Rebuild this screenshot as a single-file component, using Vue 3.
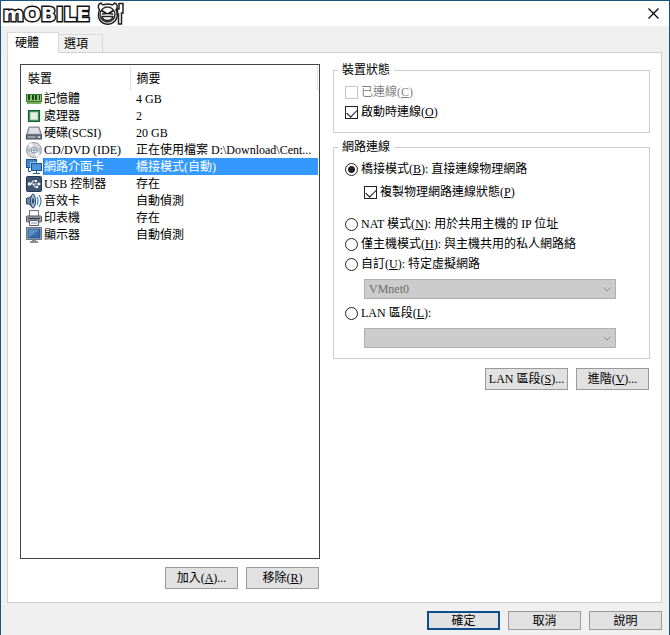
<script setup>
import { ref } from 'vue'

const devices = [
  { icon: 'memory', name: '記憶體', summary: '4 GB' },
  { icon: 'cpu', name: '處理器', summary: '2' },
  { icon: 'disk', name: '硬碟(SCSI)', summary: '20 GB' },
  { icon: 'cd', name: 'CD/DVD (IDE)', summary: '正在使用檔案 D:\\Download\\Cent...' },
  { icon: 'network', name: '網路介面卡', summary: '橋接模式(自動)' },
  { icon: 'usb', name: 'USB 控制器', summary: '存在' },
  { icon: 'sound', name: '音效卡', summary: '自動偵測' },
  { icon: 'printer', name: '印表機', summary: '存在' },
  { icon: 'display', name: '顯示器', summary: '自動偵測' }
]

const selected = ref(4)
const connected = ref(false)
const connectAtPowerOn = ref(true)
const replicate = ref(true)
const mode = ref('bridged')
</script>

<template>
  <div class="window">
    <header class="titlebar">
      <h1 class="logo">
        <span class="brand">mOBILE</span>
        <svg class="mascot" viewBox="0 0 28 24" aria-hidden="true">
          <path d="M2.500 8 C0.500 5 1 1.500 4 1 C4.500 2.500 6 3 7.500 2.500 Q11 1.500 14 2.500 C15.500 3 17 2.500 17.500 1 C20.500 1.500 21 5 19 8 Q22 14 18 19 Q14 23 9 22 Q3 21 1.500 15 Q1 11 2.500 8Z" fill="#fff" stroke="#222" stroke-width="1.500" />
          <circle cx="10.500" cy="12.500" r="7.500" fill="#fff" stroke="#333" stroke-width="1.500" />
          <path d="M4.500 8.500L9.500 11.500L5 12M16.500 8.500L11.500 11.500L16 12" fill="none" stroke="#111" stroke-width="1.600" />
          <path d="M5 14.500H16Q15 18.500 10.500 18.500Q6 18.500 5 14.500Z" fill="#fff" stroke="#222" stroke-width="1.300" />
          <path d="M22 1.500H26V11H24.500V22H21.500V12H20.500V7H22Z" fill="#fff" stroke="#222" stroke-width="1.500" />
        </svg>
      </h1>
      <button class="close" type="button" aria-label="關閉">
        <svg viewBox="0 0 11 11" aria-hidden="true">
          <path d="M0.500 0.500 L10.500 10.500 M10.500 0.500 L0.500 10.500" stroke="#000" stroke-width="1.200" />
        </svg>
      </button>
    </header>

    <main class="body">
      <div class="tabs" role="tablist">
        <button class="tab active" type="button" role="tab" aria-selected="true">硬體</button>
        <button class="tab" type="button" role="tab" aria-selected="false">選項</button>
      </div>

      <div class="panel" role="tabpanel">
        <section class="left">
          <div class="list">
            <table>
              <colgroup>
                <col class="c-icon" />
                <col class="c-name" />
                <col />
              </colgroup>
              <thead>
                <tr>
                  <th colspan="2">裝置</th>
                  <th>摘要</th>
                </tr>
              </thead>
              <tbody>
                <tr v-for="(d, i) in devices" :key="d.name" :class="{ selected: i === selected }" @click="selected = i">
                  <td class="icon">
                    <svg v-if="d.icon === 'memory'" viewBox="0 0 16 16">
                      <path d="M0 3H16V11H15V13H1V11H0Z" fill="#2b7a2e" />
                      <path d="M1 4H15V10H1Z" fill="#8dc06a" />
                      <path d="M2 4H4V9H2ZM6 4H8V9H6ZM9 4H11V9H9ZM13 4H14V9H13Z" fill="#17451c" />
                      <path d="M2 11V13M4 11V13M6 11V13M8 11V13M10 11V13M12 11V13M14 11V13" stroke="#d6e078" />
                    </svg>
                    <svg v-else-if="d.icon === 'cpu'" viewBox="0 0 16 16">
                      <rect x="2" y="2" width="12" height="12" fill="#3d9657" />
                      <path d="M2.500 2.500H13.500V13.500H2.500Z" fill="none" stroke="#17632f" stroke-width="1.200" />
                      <rect x="4.500" y="4.500" width="7" height="7" fill="#e4eee4" stroke="#b9d8be" />
                    </svg>
                    <svg v-else-if="d.icon === 'disk'" viewBox="0 0 16 16">
                      <path d="M3 2H13L15.500 10H0.500Z" fill="#c3c8ce" stroke="#737a84" />
                      <path d="M4 3H12L13 8H3Z" fill="#dfe3e7" />
                      <rect x="0.500" y="10" width="15" height="4" fill="#747c88" stroke="#454d59" />
                      <path d="M2 12H9" stroke="#bfc5ce" />
                      <circle cx="13" cy="12" r="1" fill="#dfe6ed" />
                    </svg>
                    <svg v-else-if="d.icon === 'cd'" viewBox="0 0 16 16">
                      <circle cx="8" cy="8" r="7.500" fill="#d5d8dc" stroke="#9097a0" />
                      <path d="M8 8L2 3A8 8 0 0 1 6 1ZM8 8L14 13A8 8 0 0 1 10 15Z" fill="#f7f8fa" />
                      <path d="M8 8L1 11A7 7 0 0 1 1 6ZM8 8L15 5A7 7 0 0 1 15 10Z" fill="#b9bfc8" />
                      <circle cx="8" cy="8" r="3" fill="#e6ebf0" stroke="#8996a8" />
                      <circle cx="8" cy="8" r="1" fill="#fff" stroke="#5d7fa4" />
                    </svg>
                    <svg v-else-if="d.icon === 'network'" viewBox="0 0 16 16">
                      <rect x="0.500" y="0.500" width="10" height="8" fill="#4187c8" stroke="#1b5798" />
                      <rect x="4.500" y="3.500" width="11" height="9" fill="#fff" />
                      <rect x="5.500" y="4.500" width="10" height="7" fill="#4d95d8" stroke="#195391" />
                      <path d="M10.500 12V14M7 14.500H14M2.500 9V12.500H5" fill="none" stroke="#235b90" />
                    </svg>
                    <svg v-else-if="d.icon === 'usb'" viewBox="0 0 16 16">
                      <rect x="0.500" y="0.500" width="15" height="15" rx="1" fill="#3c5570" stroke="#263b52" />
                      <path d="M3 8H13M5 8L7 5H10M7 8L9 11H11" fill="none" stroke="#e7edf3" stroke-width="1.200" />
                      <circle cx="3.500" cy="8" r="1.800" fill="#eff3f7" />
                      <path d="M12 6L15 8L12 10Z" fill="#fff" />
                      <rect x="9" y="4" width="2" height="2" fill="#fff" />
                      <circle cx="11" cy="11" r="1.200" fill="#fff" />
                    </svg>
                    <svg v-else-if="d.icon === 'sound'" viewBox="0 0 16 16">
                      <path d="M0.500 5H3L7 1V15L3 11H0.500Z" fill="#6b88a9" stroke="#2e4b70" />
                      <ellipse cx="7" cy="8" rx="2.500" ry="7" fill="#9db6d0" stroke="#294b76" />
                      <ellipse cx="7" cy="8" rx="1" ry="3" fill="#27476f" />
                      <path d="M11 4Q13 8 11 12M13 2Q17 8 13 14" fill="none" stroke="#3d7fc2" stroke-width="1.200" />
                    </svg>
                    <svg v-else-if="d.icon === 'printer'" viewBox="0 0 16 16">
                      <path d="M3.500 0.500H12.500V7H3.500Z" fill="#fff" stroke="#6b7077" />
                      <rect x="0.500" y="6" width="15" height="6" rx="1" fill="#a5aab2" stroke="#4c525b" />
                      <path d="M2 8.500H14" stroke="#343b44" stroke-width="1.500" />
                      <path d="M3.500 10.500H12.500V15.500H3.500Z" fill="#f7f8f9" stroke="#565d66" />
                      <path d="M5 13H11" stroke="#8c929a" />
                    </svg>
                    <svg v-else viewBox="0 0 16 16">
                      <rect x="0.500" y="0.500" width="15" height="12" fill="#d4dae1" stroke="#6d7782" />
                      <rect x="2" y="2" width="12" height="9" fill="#386fa9" stroke="#234c7b" />
                      <path d="M2.500 10.500V2.500H13.500Z" fill="#5b91c6" />
                      <path d="M6 13H10V14H12V16H4V14H6Z" fill="#87919d" />
                    </svg>
                  </td>
                  <td class="name">{{ d.name }}</td>
                  <td class="summary">{{ d.summary }}</td>
                </tr>
              </tbody>
            </table>
          </div>
          <div class="actions">
            <button class="btn" type="button">加入(<u>A</u>)...</button>
            <button class="btn" type="button">移除(<u>R</u>)</button>
          </div>
        </section>

        <section class="right">
          <fieldset>
            <legend>裝置狀態</legend>
            <label class="opt off"><input v-model="connected" type="checkbox" disabled /><span>已連線(<u>C</u>)</span></label>
            <label class="opt"><input v-model="connectAtPowerOn" type="checkbox" /><span>啟動時連線(<u>O</u>)</span></label>
          </fieldset>

          <fieldset class="network">
            <legend>網路連線</legend>
            <label class="opt"><input v-model="mode" type="radio" name="mode" value="bridged" /><span>橋接模式(<u>B</u>): 直接連線物理網路</span></label>
            <label class="opt sub"><input v-model="replicate" type="checkbox" /><span>複製物理網路連線狀態(<u>P</u>)</span></label>
            <label class="opt"><input v-model="mode" type="radio" name="mode" value="nat" /><span>NAT 模式(<u>N</u>): 用於共用主機的 IP 位址</span></label>
            <label class="opt"><input v-model="mode" type="radio" name="mode" value="host" /><span>僅主機模式(<u>H</u>): 與主機共用的私人網路絡</span></label>
            <label class="opt"><input v-model="mode" type="radio" name="mode" value="custom" /><span>自訂(<u>U</u>): 特定虛擬網路</span></label>
            <div class="combo">
              <select aria-label="特定虛擬網路" disabled><option>VMnet0</option></select>
              <svg viewBox="0 0 8 5" aria-hidden="true"><path d="M0.500 0.500L4 4L7.500 0.500" fill="none" stroke="#8a8a8a" /></svg>
            </div>
            <label class="opt"><input v-model="mode" type="radio" name="mode" value="lan" /><span>LAN 區段(<u>L</u>):</span></label>
            <div class="combo">
              <select aria-label="LAN 區段" disabled><option></option></select>
              <svg viewBox="0 0 8 5" aria-hidden="true"><path d="M0.500 0.500L4 4L7.500 0.500" fill="none" stroke="#8a8a8a" /></svg>
            </div>
          </fieldset>

          <div class="actions">
            <button class="btn wide" type="button">LAN 區段(<u>S</u>)...</button>
            <button class="btn" type="button">進階(<u>V</u>)...</button>
          </div>
        </section>
      </div>
    </main>

    <footer class="footer">
      <button class="btn primary" type="button">確定</button>
      <button class="btn" type="button">取消</button>
      <button class="btn" type="button">說明</button>
    </footer>
  </div>
</template>

<style>
body {
  margin: 0;
}
</style>

<style scoped>
* {
  box-sizing: border-box;
}

.window {
  display: flex;
  flex-direction: column;
  min-height: 100vh;
  border: 1px solid #1d567c;
  border-bottom: 0;
  background: #f0f0f0;
  color: #000;
  font-family: "Liberation Serif", "Noto Sans CJK TC", serif;
  font-size: 12px;
  line-height: 16px;
}

button,
select,
input {
  margin: 0;
  font: inherit;
  color: inherit;
}

u {
  text-underline-offset: 1px;
}

/* Title bar */
.titlebar {
  display: flex;
  align-items: center;
  justify-content: space-between;
  height: 25px;
  padding: 0 10px 0 2px;
  background: #fff;
}

.logo {
  display: flex;
  align-items: center;
  margin: 0;
}

.brand {
  width: 94px;
  font-family: "DejaVu Sans", sans-serif;
  font-size: 20px;
  font-weight: 700;
  line-height: 24px;
  color: #fff;
  -webkit-text-stroke: 3px #111;
  paint-order: stroke fill;
}

.mascot {
  width: 28px;
  height: 24px;
}

.close {
  display: flex;
  padding: 0;
  border: 0;
  background: none;
}

.close svg {
  width: 11px;
  height: 11px;
}

/* Tabs */
.body {
  display: flex;
  flex: 1;
  flex-direction: column;
  padding: 6px 7px 0 6px;
}

.tabs {
  display: flex;
  align-items: flex-end;
}

.tab {
  height: 18px;
  padding: 0 14px 0 5px;
  border: 1px solid #d9d9d9;
  border-width: 1px 1px 0 0;
  background: #f0f0f0;
}

.tab.active {
  z-index: 1;
  height: 21px;
  margin-bottom: -1px;
  padding: 0 19px 1px 7px;
  border-left-width: 1px;
  background: #fff;
}

.panel {
  display: flex;
  flex: 1;
  gap: 13px;
  padding: 11px 11px 13px 12px;
  border: 1px solid #d0d0d0;
  background: #fff;
}

/* Device list */
.left {
  display: flex;
  flex: 300 1 0;
  flex-direction: column;
  gap: 8px;
  min-width: 0;
}

.list {
  flex: 1;
  padding: 1px;
  border: 1px solid #444;
}

table {
  width: 100%;
  table-layout: fixed;
  border-collapse: collapse;
}

.c-icon {
  width: 21px;
}

.c-name {
  width: 87px;
}

th {
  height: 24px;
  padding: 2px 6px 0;
  border-right: 1px solid #e0e0e0;
  font-weight: 400;
  text-align: left;
}

td {
  height: 17px;
  padding: 0;
  line-height: 16px;
  white-space: nowrap;
}

.icon svg {
  display: block;
  width: 16px;
  height: 16px;
  margin-left: 4px;
}

.name {
  padding-left: 1px;
}

.summary {
  padding-left: 6px;
}

.selected .name,
.selected .summary {
  background: #3399ff;
  color: #fff;
}

.selected .name {
  box-shadow: inset 1px 0 #2a78c4;
}

/* Buttons */
.actions {
  display: flex;
  justify-content: flex-end;
  gap: 8px;
  padding-right: 1px;
}

.btn {
  width: 73px;
  height: 22px;
  padding: 0;
  border: 1px solid #9a9a9a;
  background: #e1e1e1;
  white-space: nowrap;
}

.btn.wide {
  width: 83px;
}

/* Connection settings */
.right {
  flex: 317 1 0;
  min-width: 0;
}

fieldset {
  min-width: 0;
  margin: 0 0 8px;
  padding: 6px 11px 10px;
  border: 1px solid #cdcdcd;
}

.network {
  margin-bottom: 9px;
  padding-bottom: 6px;
}

legend {
  margin-left: -7px;
  padding: 0 4px;
  line-height: 12px;
}

.opt {
  display: flex;
  align-items: center;
  gap: 3px;
  height: 20px;
  white-space: nowrap;
}

.opt.off {
  color: #838383;
}

.opt.sub {
  height: 26px;
  margin: 0 0 9px 19px;
}

.opt input {
  flex: none;
  width: 13px;
  height: 13px;
  appearance: none;
  border: 1px solid #222;
  background: #fff;
}

.opt input:disabled {
  border-color: #c6c6c6;
}

.opt input[type="radio"] {
  border-radius: 50%;
}

.opt input[type="radio"]:checked {
  background: radial-gradient(circle, #222 3px, #fff 4px);
}

.opt input[type="checkbox"]:checked::before {
  content: "";
  display: block;
  width: 9px;
  height: 5px;
  margin: 2px 0 0 1px;
  border: solid #111;
  border-width: 0 0 1px 1px;
  transform: rotate(-45deg);
}

.combo {
  display: grid;
  align-items: center;
  margin: 5px 22px 4px 19px;
}

.combo select {
  grid-area: 1 / 1;
  width: 100%;
  height: 20px;
  padding: 0 4px;
  border: 1px solid #b0b0b0;
  border-radius: 0;
  appearance: none;
  background: #cccccc;
  color: #6d6d6d;
  opacity: 1;
}

.combo svg {
  grid-area: 1 / 1;
  justify-self: end;
  width: 8px;
  height: 5px;
  margin-right: 5px;
  pointer-events: none;
}

/* Dialog footer */
.footer {
  display: flex;
  justify-content: flex-end;
  gap: 8px;
  padding: 8px 7px 5px;
}

.footer .btn {
  height: 19px;
  line-height: 16px;
}

.footer .primary {
  border: 2px solid #0c4f8c;
}
</style>
